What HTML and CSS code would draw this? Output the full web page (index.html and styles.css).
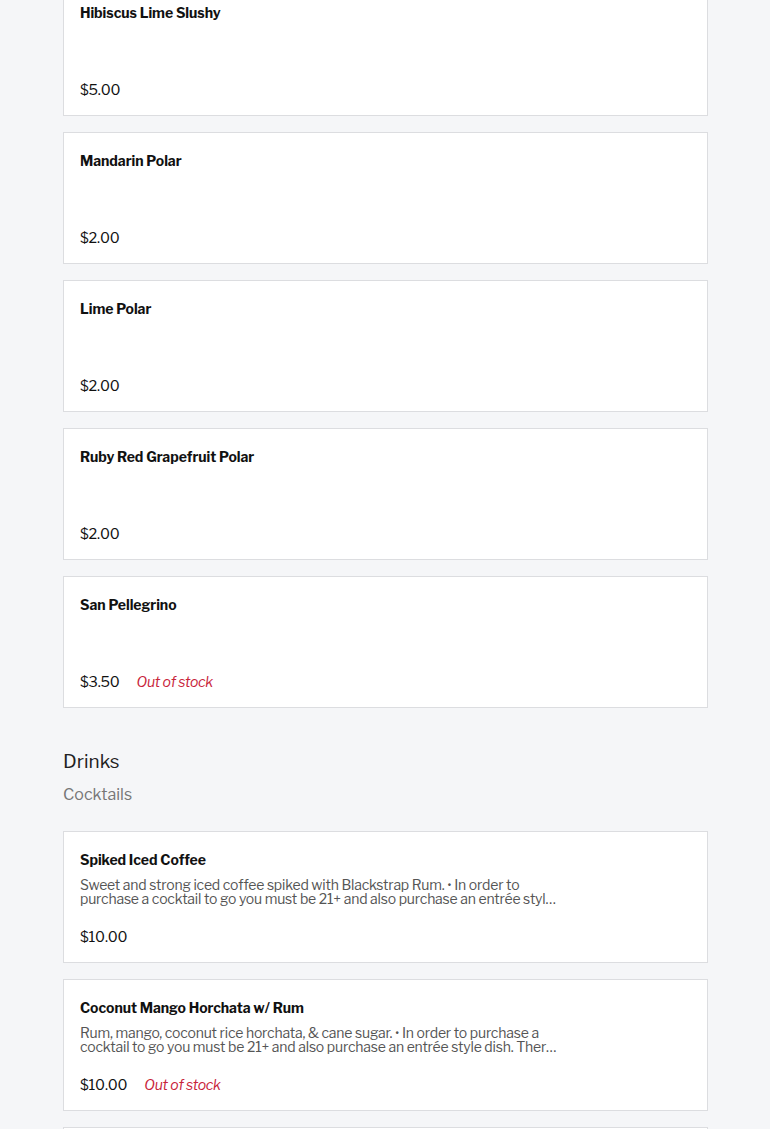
FILE: index.html
```html
<!DOCTYPE html>
<html lang="en">
<head>
<meta charset="utf-8">
<title>Menu</title>
<link rel="stylesheet" href="styles.css">
</head>
<body>
<main class="menu">
  <section class="items">
    <article class="card">
      <h3 class="card-title">Hibiscus Lime Slushy</h3>
      <p class="card-desc"></p>
      <div class="card-foot"><span class="price">$5.00</span></div>
    </article>
    <article class="card">
      <h3 class="card-title">Mandarin Polar</h3>
      <p class="card-desc"></p>
      <div class="card-foot"><span class="price">$2.00</span></div>
    </article>
    <article class="card">
      <h3 class="card-title">Lime Polar</h3>
      <p class="card-desc"></p>
      <div class="card-foot"><span class="price">$2.00</span></div>
    </article>
    <article class="card">
      <h3 class="card-title">Ruby Red Grapefruit Polar</h3>
      <p class="card-desc"></p>
      <div class="card-foot"><span class="price">$2.00</span></div>
    </article>
    <article class="card">
      <h3 class="card-title">San Pellegrino</h3>
      <p class="card-desc"></p>
      <div class="card-foot"><span class="price">$3.50</span><span class="oos">Out of stock</span></div>
    </article>
  </section>

  <header class="section-head">
    <h2 class="section-title">Drinks</h2>
    <p class="section-sub">Cocktails</p>
  </header>

  <section class="items">
    <article class="card">
      <h3 class="card-title">Spiked Iced Coffee</h3>
      <p class="card-desc">Sweet and strong iced coffee spiked with Blackstrap Rum. • In order to purchase a cocktail to go you must be 21+ and also purchase an entrée style dish. There is a limit of two cocktails per entrée.</p>
      <div class="card-foot"><span class="price">$10.00</span></div>
    </article>
    <article class="card">
      <h3 class="card-title">Coconut Mango Horchata w/ Rum</h3>
      <p class="card-desc">Rum, mango, coconut rice horchata, &amp; cane sugar. • In order to purchase a cocktail to go you must be 21+ and also purchase an entrée style dish. There is a limit of two cocktails per entrée.</p>
      <div class="card-foot"><span class="price">$10.00</span><span class="oos">Out of stock</span></div>
    </article>
    <article class="card">
      <h3 class="card-title">Margarita</h3>
      <p class="card-desc"></p>
      <div class="card-foot"><span class="price">$10.00</span></div>
    </article>
  </section>
</main>
</body>
</html>
```
FILE: styles.css
```css
html, body {
  margin: 0;
  padding: 0;
  background: #f5f6f8;
}
body {
  font-family: "Libre Franklin", Inter, "Liberation Sans", sans-serif;
  color: #111;
  overflow: hidden;
}
.menu {
  width: 645px;
  margin: -16px 0 0 63px;
}
.items {
  display: flex;
  flex-direction: column;
  gap: 16px;
}
.card {
  background: #fff;
  border: 1px solid #dcdde0;
  padding: 17px 16px 14px 16px;
  display: flex;
  flex-direction: column;
}
.card-title {
  margin: 0;
  font-size: 14px;
  font-weight: 700;
  line-height: 22px;
  letter-spacing: -0.05px;
}
.card-desc {
  margin: 7px 0 0;
  max-width: 478px;
  height: 28px;
  font-size: 14px;
  line-height: 14px;
  color: #555;
  letter-spacing: -0.2px;
  display: -webkit-box;
  -webkit-line-clamp: 2;
  -webkit-box-orient: vertical;
  overflow: hidden;
}
.card-foot {
  margin-top: 20px;
  display: flex;
  align-items: center;
  gap: 17px;
  line-height: 22px;
}
.price {
  font-size: 14.5px;
  letter-spacing: -0.2px;
}
.oos {
  font-size: 14px;
  font-style: italic;
  color: #c8243a;
  letter-spacing: -0.3px;
}
.section-head {
  padding: 42px 0 26px;
}
.section-title {
  margin: 0;
  font-size: 19px;
  font-weight: 400;
  line-height: 24px;
  color: #222;
}
.section-sub {
  margin: 11px 0 0;
  font-size: 16px;
  line-height: 20px;
  color: #777;
}
```
